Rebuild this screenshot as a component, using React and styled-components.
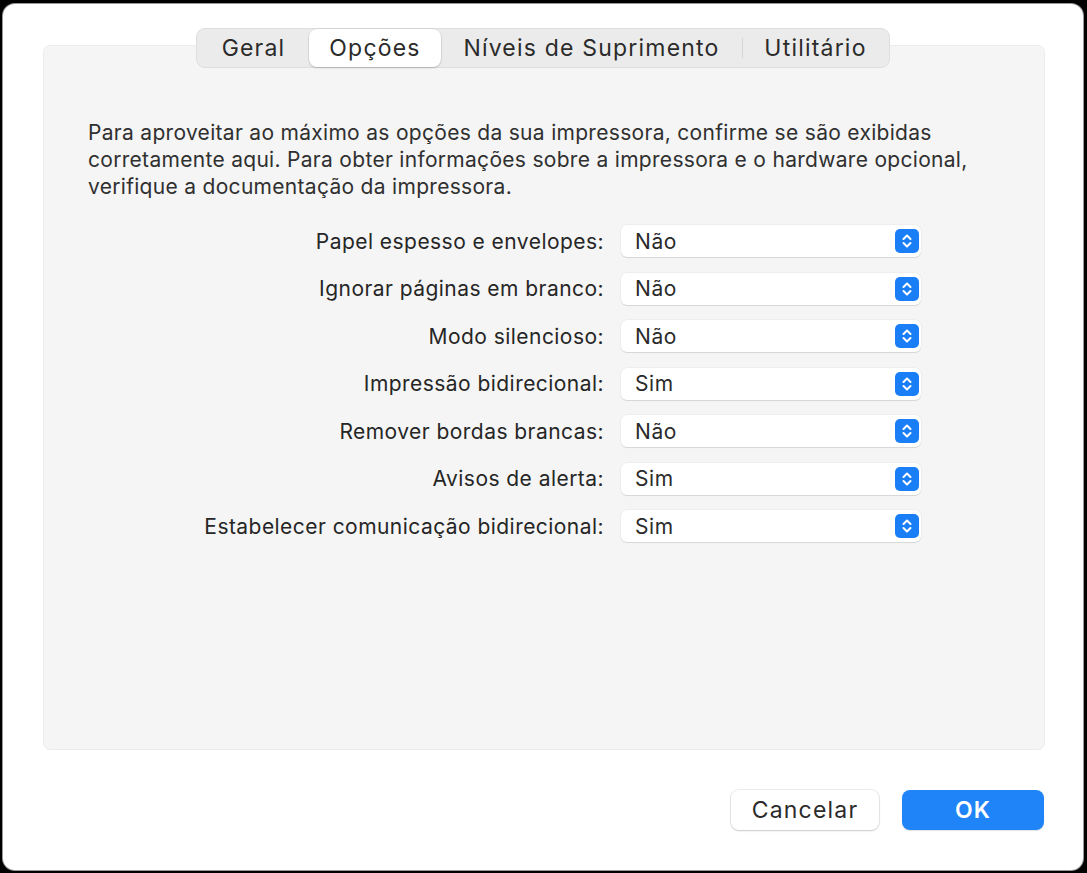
import styled, { createGlobalStyle } from 'styled-components'

const Global = createGlobalStyle`
  html, body {
    margin: 0;
    padding: 0;
    background: #000;
  }
  body {
    font-family: Inter, "Liberation Sans", Arial, sans-serif;
    color: #262626;
  }
`

const Screen = styled.div`
  width: 1087px;
  height: 873px;
  padding: 4px 4px 3px 3px;
  box-sizing: border-box;
  background: #000;
`

const Window = styled.div`
  height: 100%;
  background: #fff;
  border-radius: 12px;
  box-shadow: 0 0 0 1px #9a9a9a;
  padding: 24px 38px 40px 40px;
  box-sizing: border-box;
  display: flex;
  flex-direction: column;
`

const TabBar = styled.div`
  align-self: center;
  position: relative;
  z-index: 2;
  display: flex;
  align-items: center;
  height: 40px;
  box-sizing: border-box;
  padding: 1px;
  background: #ebebeb;
  border: 1px solid #dedede;
  border-radius: 9px;
  margin-right: 2px;
`

const Tab = styled.div`
  height: 38px;
  display: flex;
  align-items: center;
  justify-content: center;
  box-sizing: border-box;
  width: ${p => p.$w}px;
  font-size: 23px;
  letter-spacing: 1.2px;
  color: #2b2b2b;
  border-radius: 8px;
  background: ${p => (p.$active ? '#fff' : 'transparent')};
  box-shadow: ${p => (p.$active ? '0 1px 2px rgba(0,0,0,0.18), 0 0 0 0.5px rgba(0,0,0,0.08)' : 'none')};
`

const Divider = styled.div`
  width: 1px;
  height: 20px;
  background: #d4d4d4;
`

const Panel = styled.div`
  margin-top: -23px;
  height: 705px;
  box-sizing: border-box;
  background: #f5f5f5;
  border: 1px solid #ececec;
  border-radius: 7px;
  padding: 73px 40px 0 44px;
`

const Intro = styled.p`
  margin: 0;
  max-width: 905px;
  font-size: 21px;
  line-height: 27px;
  color: #303030;
  letter-spacing: 0.3px;
`

const Form = styled.div`
  margin-top: 25px;
  display: grid;
  grid-template-columns: 516px 300px;
  column-gap: 17px;
  row-gap: 15.5px;
  align-items: center;
`

const Label = styled.div`
  text-align: right;
  font-size: 21px;
  color: #262626;
  letter-spacing: 0.45px;
`

const Select = styled.div`
  height: 32px;
  display: flex;
  align-items: center;
  justify-content: space-between;
  padding: 0 2px 0 14px;
  background: #fff;
  border-radius: 6px;
  box-shadow: 0 1px 1px rgba(0, 0, 0, 0.1), 0 0 0 0.5px rgba(0, 0, 0, 0.06);
  font-size: 21px;
  letter-spacing: 0.6px;
  color: #2a2a2a;
`

const Stepper = styled.svg`
  width: 24px;
  height: 24px;
  flex: none;
`

const Footer = styled.div`
  margin-top: 40px;
  display: flex;
  justify-content: flex-end;
  gap: 23px;
  padding-right: 1px;
`

const Button = styled.button`
  height: 40px;
  width: ${p => p.$w}px;
  border-radius: 8px;
  font-family: inherit;
  font-size: 23px;
  letter-spacing: 1.2px;
  border: none;
  color: ${p => (p.$primary ? '#fff' : '#2b2b2b')};
  background: ${p => (p.$primary ? '#1f84f8' : '#fff')};
  box-shadow: ${p =>
    p.$primary
      ? '0 1px 1px rgba(0,0,0,0.12)'
      : '0 1px 2px rgba(0,0,0,0.15), 0 0 0 1px rgba(0,0,0,0.07)'};
  font-weight: ${p => (p.$primary ? 600 : 400)};
`

function StepIcon() {
  return (
    <Stepper viewBox="0 0 24 24">
      <rect x="0" y="0" width="24" height="24" rx="5" fill="#1a7ef6" />
      <path d="M8.5 10 L12 6.5 L15.5 10" fill="none" stroke="#fff" strokeWidth="2" strokeLinecap="round" strokeLinejoin="round" />
      <path d="M8.5 14 L12 17.5 L15.5 14" fill="none" stroke="#fff" strokeWidth="2" strokeLinecap="round" strokeLinejoin="round" />
    </Stepper>
  )
}

const options = [
  ['Papel espesso e envelopes:', 'Não'],
  ['Ignorar páginas em branco:', 'Não'],
  ['Modo silencioso:', 'Não'],
  ['Impressão bidirecional:', 'Sim'],
  ['Remover bordas brancas:', 'Não'],
  ['Avisos de alerta:', 'Sim'],
  ['Estabelecer comunicação bidirecional:', 'Sim'],
]

export default function App() {
  return (
    <Screen>
      <Global />
      <Window>
        <TabBar>
          <Tab $w={111}>Geral</Tab>
          <Tab $w={132} $active>Opções</Tab>
          <Tab $w={301}>Níveis de Suprimento</Tab>
          <Divider />
          <Tab $w={145}>Utilitário</Tab>
        </TabBar>
        <Panel>
          <Intro>
            Para aproveitar ao máximo as opções da sua impressora, confirme se são exibidas
            corretamente aqui. Para obter informações sobre a impressora e o hardware opcional,
            verifique a documentação da impressora.
          </Intro>
          <Form>
            {options.map(([label, value]) => (
              <>
                <Label key={label + 'l'}>{label}</Label>
                <Select key={label + 's'}>
                  {value}
                  <StepIcon />
                </Select>
              </>
            ))}
          </Form>
        </Panel>
        <Footer>
          <Button $w={148}>Cancelar</Button>
          <Button $w={142} $primary>OK</Button>
        </Footer>
      </Window>
    </Screen>
  )
}
